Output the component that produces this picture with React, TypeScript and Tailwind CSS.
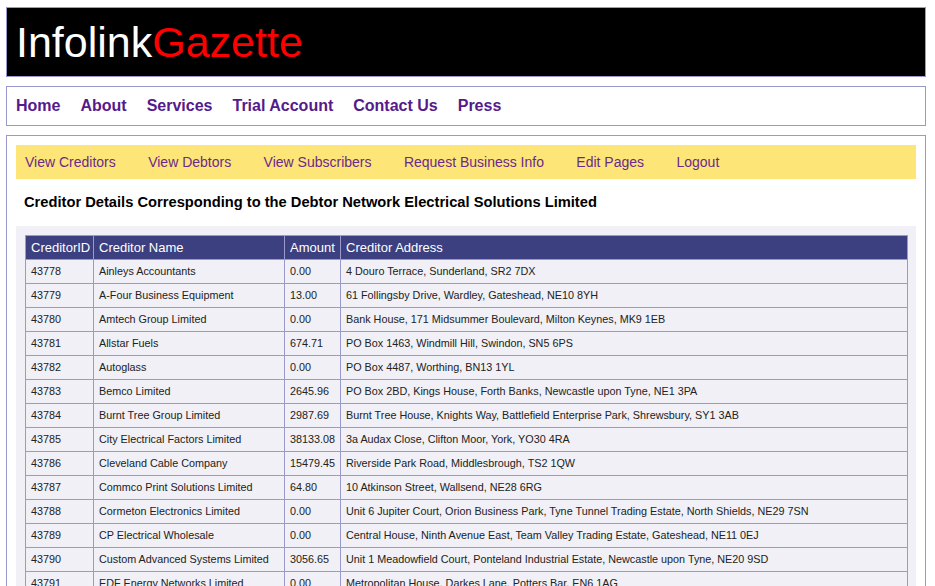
import React from "react";

const rows: [string, string, string, string][] = [
  ["43778", "Ainleys Accountants", "0.00", "4 Douro Terrace, Sunderland, SR2 7DX"],
  ["43779", "A-Four Business Equipment", "13.00", "61 Follingsby Drive, Wardley, Gateshead, NE10 8YH"],
  ["43780", "Amtech Group Limited", "0.00", "Bank House, 171 Midsummer Boulevard, Milton Keynes, MK9 1EB"],
  ["43781", "Allstar Fuels", "674.71", "PO Box 1463, Windmill Hill, Swindon, SN5 6PS"],
  ["43782", "Autoglass", "0.00", "PO Box 4487, Worthing, BN13 1YL"],
  ["43783", "Bemco Limited", "2645.96", "PO Box 2BD, Kings House, Forth Banks, Newcastle upon Tyne, NE1 3PA"],
  ["43784", "Burnt Tree Group Limited", "2987.69", "Burnt Tree House, Knights Way, Battlefield Enterprise Park, Shrewsbury, SY1 3AB"],
  ["43785", "City Electrical Factors Limited", "38133.08", "3a Audax Close, Clifton Moor, York, YO30 4RA"],
  ["43786", "Cleveland Cable Company", "15479.45", "Riverside Park Road, Middlesbrough, TS2 1QW"],
  ["43787", "Commco Print Solutions Limited", "64.80", "10 Atkinson Street, Wallsend, NE28 6RG"],
  ["43788", "Cormeton Electronics Limited", "0.00", "Unit 6 Jupiter Court, Orion Business Park, Tyne Tunnel Trading Estate, North Shields, NE29 7SN"],
  ["43789", "CP Electrical Wholesale", "0.00", "Central House, Ninth Avenue East, Team Valley Trading Estate, Gateshead, NE11 0EJ"],
  ["43790", "Custom Advanced Systems Limited", "3056.65", "Unit 1 Meadowfield Court, Ponteland Industrial Estate, Newcastle upon Tyne, NE20 9SD"],
  ["43791", "EDF Energy Networks Limited", "0.00", "Metropolitan House, Darkes Lane, Potters Bar, EN6 1AG"],
];

const mainNav = ["Home", "About", "Services", "Trial Account", "Contact Us", "Press"];
const subNav = ["View Creditors", "View Debtors", "View Subscribers", "Request Business Info", "Edit Pages", "Logout"];

export default function App() {
  return (
    <div className="h-[586px] overflow-hidden bg-white pt-[7px] pl-[6px] font-['Liberation_Sans',Arial,sans-serif]">
      <div className="flex w-[920px] flex-col gap-[9px]">
        <header className="flex h-[70px] items-center border border-[#9999cc] bg-black pl-[9px]">
          <h1 className="text-[43px] leading-none font-normal">
            <span className="text-white">Infolink</span>
            <span className="text-[#ff0000]">Gazette</span>
          </h1>
        </header>

        <nav className="flex h-[40px] items-center gap-[20px] border border-[#9999cc] bg-white pl-[9px]">
          {mainNav.map((n) => (
            <a key={n} className="text-[16px] font-bold text-[#551a8b]">
              {n}
            </a>
          ))}
        </nav>

        <main className="h-[500px] border border-[#9999cc] bg-white p-[9px]">
          <div className="flex h-[34px] items-center gap-[32.4px] bg-[#fde577] pl-[9px]">
            {subNav.map((n) => (
              <a key={n} className="text-[14px] text-[#6a2a8c]">
                {n}
              </a>
            ))}
          </div>

          <h2 className="flex h-[47px] items-center pl-[8px] text-[14.7px] font-bold text-black">
            Creditor Details Corresponding to the Debtor Network Electrical Solutions Limited
          </h2>

          <div className="bg-[#f0f0f6] p-[9px]">
            <table className="w-[883px] table-fixed border-collapse border border-[#9999cc]">
              <colgroup>
                <col className="w-[68px]" />
                <col className="w-[191px]" />
                <col className="w-[56px]" />
                <col />
              </colgroup>
              <thead>
                <tr className="h-[24px] bg-[#3d4080]">
                  {["CreditorID", "Creditor Name", "Amount", "Creditor Address"].map((h) => (
                    <th
                      key={h}
                      className="border border-[#9999cc] px-[5px] py-0 text-left text-[13px] font-normal text-white"
                    >
                      {h}
                    </th>
                  ))}
                </tr>
              </thead>
              <tbody>
                {rows.map((r) => (
                  <tr key={r[0]} className="h-[24px]">
                    {r.map((c, i) => (
                      <td
                        key={i}
                        className="overflow-hidden whitespace-nowrap border border-[#9999cc] px-[5px] py-0 text-[10.8px] text-[#222]"
                      >
                        {c}
                      </td>
                    ))}
                  </tr>
                ))}
              </tbody>
            </table>
          </div>
        </main>
      </div>
    </div>
  );
}
